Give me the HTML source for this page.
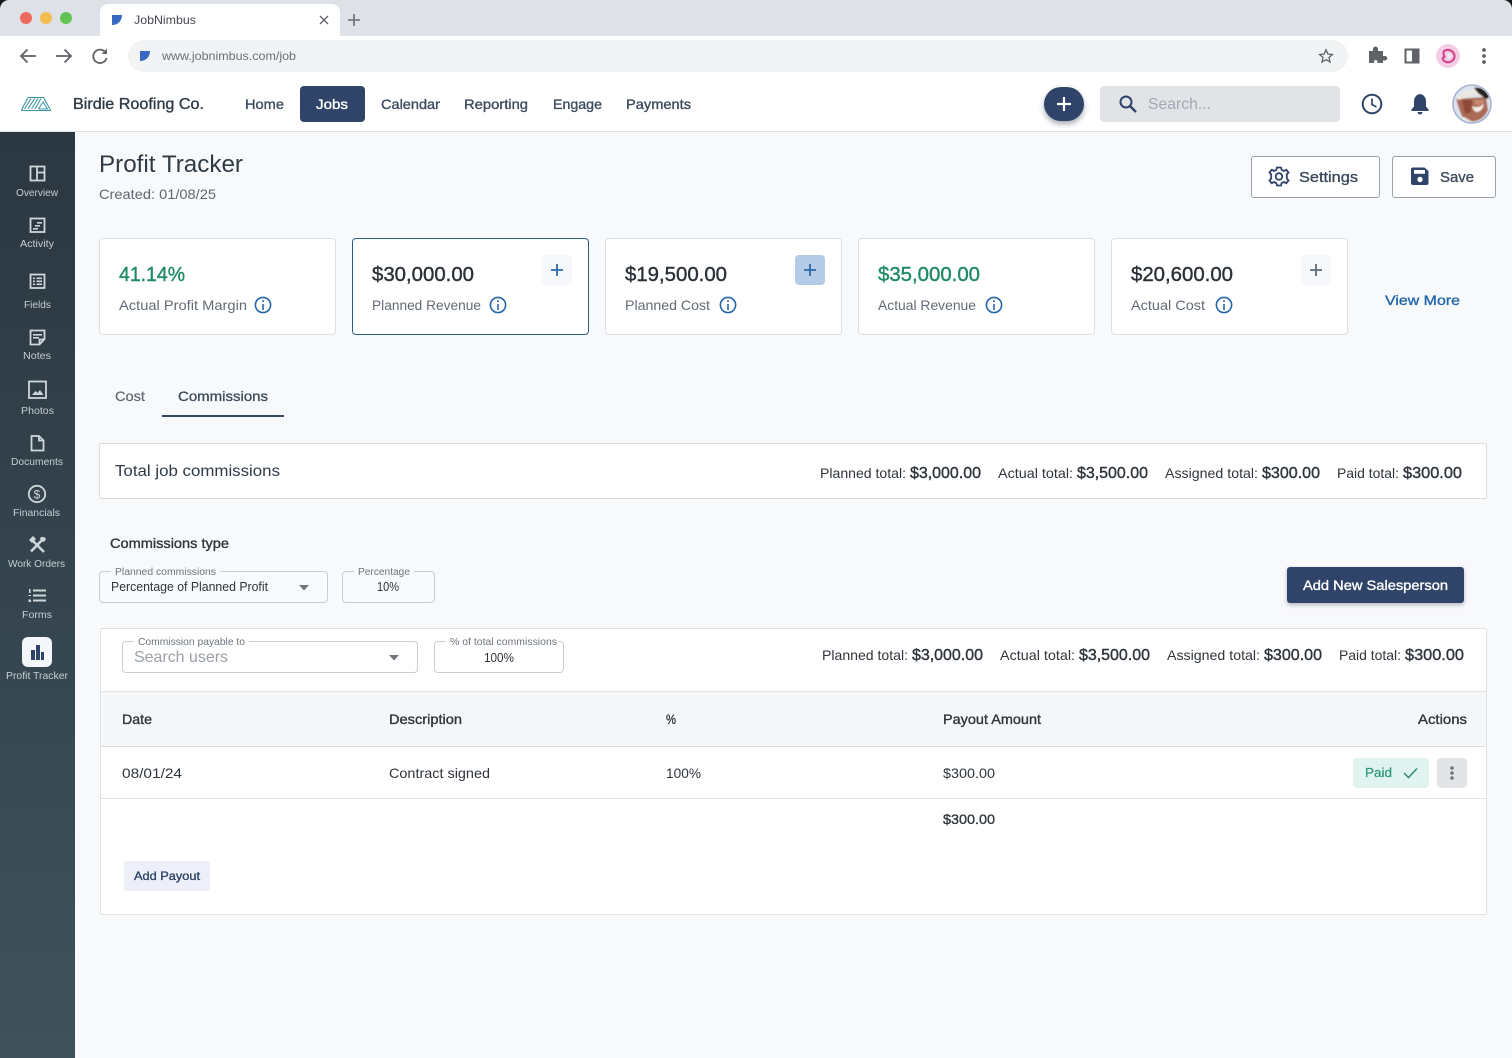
<!DOCTYPE html>
<html lang="en"><head><meta charset="utf-8"><title>JobNimbus - Profit Tracker</title>
<style>
html,body{margin:0;padding:0;width:1512px;height:1058px;overflow:hidden;background:#f8f9fb;font-family:"Liberation Sans",sans-serif}
.b{position:absolute;box-sizing:border-box}
.card{background:#fff;border:1px solid #dcdfe3;border-radius:4px;top:238px;width:237px;height:97px}
.fld{border:1px solid #c9cdd2;border-radius:4px;height:32px}
.fl{position:absolute;top:-2px;height:3px;background:#f8f9fb}
svg{position:absolute;left:0;top:0}
text{font-family:"Liberation Sans",sans-serif}
.m{stroke-width:.35px}
.nav{font-size:14px;fill:#3d4a5c;stroke:#3d4a5c;stroke-width:.35px}
.sb{font-size:10.5px;fill:#c6ced3}
.val{font-size:20px;fill:#2b3138;stroke:#2b3138;stroke-width:.4px}
.lab{font-size:14px;fill:#626b75}
.t{font-size:14px;fill:#2f353c}
.v{font-size:16px;fill:#2f353c;stroke:#2f353c;stroke-width:.4px}
.th{font-size:14px;fill:#2f353c;stroke:#2f353c;stroke-width:.35px}
.fll{font-size:10px;fill:#6d757e}
</style></head><body>

<!-- browser chrome -->
<div class="b" style="left:0;top:0;width:1512px;height:36px;background:#dee1e6"></div>
<div class="b" style="left:100px;top:4px;width:240px;height:32px;background:#fff;border-radius:8px 8px 0 0"></div>
<div class="b" style="left:0;top:36px;width:1512px;height:39px;background:#fff"></div>
<div class="b" style="left:128px;top:40px;width:1220px;height:32px;background:#f1f3f4;border-radius:16px"></div>

<!-- app header -->
<div class="b" style="left:0;top:75px;width:1512px;height:57px;background:#fff;border-bottom:1px solid #dfe2e5"></div>
<div class="b" style="left:300px;top:86px;width:65px;height:36px;background:#2f4468;border-radius:4px"></div>
<div class="b" style="left:1044px;top:87px;width:40px;height:34px;background:#2f4468;border-radius:17px;box-shadow:0 3px 6px rgba(30,40,60,.4)"></div>
<div class="b" style="left:1100px;top:86px;width:240px;height:36px;background:#e1e3e7;border-radius:4px"></div>

<!-- sidebar -->
<div class="b" style="left:0;top:132px;width:75px;height:926px;background:linear-gradient(180deg,#2b3741 0%,#3f525c 100%)"></div>
<div class="b" style="left:22px;top:637px;width:30px;height:30px;background:#f4f6f9;border-radius:6px"></div>

<!-- top buttons -->
<div class="b" style="left:1251px;top:156px;width:129px;height:42px;background:#fff;border:1px solid #9aa1aa;border-radius:3px"></div>
<div class="b" style="left:1392px;top:156px;width:104px;height:42px;background:#fff;border:1px solid #9aa1aa;border-radius:3px"></div>

<!-- metric cards -->
<div class="b card" style="left:99px"></div>
<div class="b card" style="left:352px;border-color:#2f5d8c"></div>
<div class="b card" style="left:605px"></div>
<div class="b card" style="left:858px"></div>
<div class="b card" style="left:1111px"></div>
<div class="b" style="left:542px;top:255px;width:30px;height:30px;background:#f6f8fb;border-radius:4px"></div>
<div class="b" style="left:795px;top:255px;width:30px;height:30px;background:#b5cbe8;border-radius:4px"></div>
<div class="b" style="left:1301px;top:255px;width:30px;height:30px;background:#f6f8fb;border-radius:4px"></div>

<!-- tabs -->
<div class="b" style="left:162px;top:415px;width:122px;height:2px;background:#33475f"></div>

<!-- total -->
<div class="b" style="left:99px;top:443px;width:1388px;height:56px;background:#fff;border:1px solid #d9dcdf;border-radius:2px"></div>

<!-- commissions type -->
<div class="b fld" style="left:99px;top:571px;width:229px"><div class="fl" style="left:11px;width:109px"></div></div>
<div class="b fld" style="left:342px;top:571px;width:93px"><div class="fl" style="left:11px;width:60px"></div></div>
<div class="b" style="left:1287px;top:567px;width:177px;height:36px;background:#2f4468;border-radius:3px;box-shadow:0 2px 4px rgba(30,40,60,.3)"></div>

<!-- commissions card -->
<div class="b" style="left:100px;top:628px;width:1387px;height:287px;background:#fff;border:1px solid #dfe2e5;border-radius:2px"></div>
<div class="b fld" style="left:122px;top:641px;width:296px"><div class="fl" style="left:11px;width:115px;background:#fff"></div></div>
<div class="b fld" style="left:434px;top:641px;width:130px"><div class="fl" style="left:11px;width:113px;background:#fff"></div></div>
<div class="b" style="left:101px;top:691px;width:1385px;height:56px;background:#f5f7f8;border-top:1px solid #e1e4e6;border-bottom:1px solid #dcdfe2"></div>
<div class="b" style="left:101px;top:798px;width:1385px;height:1px;background:#dfe2e5"></div>
<div class="b" style="left:1353px;top:758px;width:76px;height:30px;background:#e0f3ee;border-radius:4px"></div>
<div class="b" style="left:1437px;top:758px;width:30px;height:30px;background:#e2e4e7;border-radius:4px"></div>
<div class="b" style="left:124px;top:861px;width:86px;height:30px;background:#edf0f8;border-radius:3px"></div>

<svg width="1512" height="1058" viewBox="0 0 1512 1058" xmlns="http://www.w3.org/2000/svg">
<!-- window corners -->
<path d="M0 0H9A9 9 0 0 0 0 9Z" fill="#15181b"/><path d="M1512 0H1503A9 9 0 0 1 1512 9Z" fill="#15181b"/>
<circle cx="26" cy="18" r="6" fill="#ee6a5f"/><circle cx="46" cy="18" r="6" fill="#f5bd4f"/><circle cx="66" cy="18" r="6" fill="#61c454"/>
<!-- favicon -->
<path d="M112 15H122C122 21 118 25 112 25Z" fill="#3768c4"/>
<path d="M140 51H150C150 57 146 61 140 61Z" fill="#3768c4"/>
<text x="134" y="24" font-size="12" fill="#45494e" textLength="62" lengthAdjust="spacingAndGlyphs">JobNimbus</text>
<path d="M320 16L328 24M328 16L320 24" stroke="#5f6368" stroke-width="1.3"/>
<path d="M354 14V26M348 20H360" stroke="#6a6e73" stroke-width="1.6"/>
<path d="M36 56H21M27.500 49.500L21 56L27.500 62.500" fill="none" stroke="#5f6368" stroke-width="1.8"/>
<path d="M56 56H71M64.500 49.500L71 56L64.500 62.500" fill="none" stroke="#5f6368" stroke-width="1.8"/>
<path d="M105.500 52.500A6.700 6.700 0 1 0 106.500 58" fill="none" stroke="#5f6368" stroke-width="1.8"/><path d="M107 48.500V54H101.500Z" fill="#5f6368"/>
<text x="162" y="60" font-size="12" fill="#6b7076" textLength="134" lengthAdjust="spacingAndGlyphs">www.jobnimbus.com/job</text>
<path d="M1326 49.800L1327.900 54L1332.400 54.500L1329 57.500L1330 62L1326 59.700L1322 62L1323 57.500L1319.600 54.500L1324.100 54Z" fill="none" stroke="#5f6368" stroke-width="1.3"/>
<path d="M1369 52H1373V50A2 2 0 0 1 1378 50V52H1383V57H1385A2 2 0 0 1 1385 61.500H1383V64H1377.500V62A2 2 0 0 0 1374 62V64H1369Z" fill="#5f6368" transform="translate(0 -1)"/>
<rect x="1405.500" y="49.500" width="13" height="13" fill="#fff" stroke="#5f6368" stroke-width="2"/><rect x="1412" y="49.500" width="6.500" height="13" fill="#5f6368"/>
<circle cx="1448" cy="56" r="12" fill="#f2cfe7"/>
<path d="M1444 51C1448 48.500 1453.500 50.500 1454.500 55.500C1455 60 1450 63.500 1445.500 61.800C1442 60 1442 57.500 1444.500 56.800C1443.500 54.500 1443 52.500 1444 51Z" fill="none" stroke="#d8478c" stroke-width="2.200"/>
<path d="M1447.500 52.500L1452.500 56L1447.500 59.500Z" fill="#f7e8f2"/>
<circle cx="1484" cy="50" r="1.900" fill="#5f6368"/><circle cx="1484" cy="56" r="1.900" fill="#5f6368"/><circle cx="1484" cy="62" r="1.900" fill="#5f6368"/>

<!-- logo -->
<g fill="none" stroke="#3f97a6" stroke-width="1.100"><path d="M21 110.500H51"/><path d="M28 97.500H43.500L50.500 110M21.500 110L28 97.500"/><path d="M24.500 109L31 98.500M28 109L34.500 98.500M31.500 109L38 98.500M35 109L41 98.500M38.500 109L43 102L47.500 109H38.500"/></g>
<text x="73" y="109" font-size="16" class="m" fill="#2f3a45" stroke="#2f3a45" textLength="131" lengthAdjust="spacingAndGlyphs">Birdie Roofing Co.</text>
<text x="245" y="109" class="nav" textLength="39" lengthAdjust="spacingAndGlyphs">Home</text>
<text x="316" y="109" class="nav" style="fill:#fff;stroke:#fff" textLength="32" lengthAdjust="spacingAndGlyphs">Jobs</text>
<text x="381" y="109" class="nav" textLength="59" lengthAdjust="spacingAndGlyphs">Calendar</text>
<text x="464" y="109" class="nav" textLength="64" lengthAdjust="spacingAndGlyphs">Reporting</text>
<text x="553" y="109" class="nav" textLength="49" lengthAdjust="spacingAndGlyphs">Engage</text>
<text x="626" y="109" class="nav" textLength="65" lengthAdjust="spacingAndGlyphs">Payments</text>
<path d="M1064 97V111M1057 104H1071" stroke="#fff" stroke-width="2.200"/>
<circle cx="1126" cy="102" r="5.500" fill="none" stroke="#2f4468" stroke-width="2"/><path d="M1130 106L1136 112" stroke="#2f4468" stroke-width="2.400"/>
<text x="1148" y="109" font-size="16" fill="#a3a8b4" textLength="63" lengthAdjust="spacingAndGlyphs">Search...</text>
<circle cx="1372" cy="104" r="9.300" fill="none" stroke="#2f4468" stroke-width="2"/><path d="M1372 98.500V104.500L1376.500 107" fill="none" stroke="#2f4468" stroke-width="1.700"/>
<path d="M1420 94C1424 94.500 1426 98 1426 101.500V106.500L1428.500 109.500V111H1411.500V109.500L1414 106.500V101.500C1414 98 1416 94.500 1420 94Z" fill="#2f4468"/><path d="M1417.500 112H1422.500A2.500 2.500 0 0 1 1417.500 112Z" fill="#2f4468"/>
<!-- avatar -->
<defs><clipPath id="av"><circle cx="1472" cy="104" r="18"/></clipPath><filter id="bl" x="-10%" y="-10%" width="120%" height="120%"><feGaussianBlur stdDeviation=".7"/></filter></defs>
<circle cx="1472" cy="104" r="19" fill="#dfe6f2" stroke="#a3b3d0" stroke-width="1.600"/>
<g clip-path="url(#av)"><g filter="url(#bl)">
<rect x="1452" y="84" width="40" height="40" fill="#dde3ee"/>
<path d="M1456 99L1486 97L1488 110C1484 120 1474 124 1464 120C1460 113 1458 105 1456 99Z" fill="#ab6a54"/>
<path d="M1462 100H1472L1471 112L1465 114Z" fill="#8e4a38"/>
<path d="M1474 100H1484L1483 105H1475Z" fill="#c98a72"/>
<path d="M1456 97C1462 91 1470 89 1476 89L1482 94L1468 97L1458 100Z" fill="#ece8e1"/>
<path d="M1474 88C1480 86 1487 90 1491 97L1486 99L1478 93Z" fill="#27221f"/>
<path d="M1472 106Q1478 109 1484 104Q1482 112 1476 112Q1473 110 1472 106Z" fill="#f4eee8"/>
<path d="M1456 119L1464 117L1476 124H1456Z" fill="#e9ecef"/>
</g></g>

<!-- sidebar icons -->
<g fill="none" stroke="#cfd6da" stroke-width="1.800">
<rect x="30.500" y="166.500" width="14" height="14"/><path d="M37 166.500V180.500M37 172.500H44.500"/>
<rect x="30.500" y="218.500" width="14" height="13.500"/>
<rect x="30.500" y="274.500" width="14" height="13.500"/>
<path d="M30.500 337V330.500H44.500V339L39.500 344.500H30.500V337Z"/><path d="M39.500 344.500V339.500H44.500"/>
<rect x="29" y="381.500" width="17" height="16.500"/>
<path d="M31.500 436H39L43.500 440.500V450.500H31.500Z"/><path d="M39 436V440.500H43.500"/>
<circle cx="37" cy="494" r="8.200"/>
</g>
<g fill="#cfd6da">
<rect x="37" y="222" width="5" height="1.600"/><rect x="35" y="225" width="5" height="1.600"/><rect x="33" y="228" width="5" height="1.600"/>
<rect x="33" y="277.500" width="2" height="1.600"/><rect x="36.500" y="277.500" width="5.500" height="1.600"/><rect x="33" y="280.500" width="2" height="1.600"/><rect x="36.500" y="280.500" width="5.500" height="1.600"/><rect x="33" y="283.500" width="2" height="1.600"/><rect x="36.500" y="283.500" width="5.500" height="1.600"/>
<rect x="33" y="334" width="9" height="1.600"/><rect x="33" y="337" width="6" height="1.600"/>
<path d="M32 395L35.500 391L37.500 393L40 390L43.500 395Z"/>
<path d="M29 589H30.500V593H29ZM33 589.500H46V591.500H33ZM33 594.500H46V596.500H33ZM33 599.500H46V601.500H33ZM28.500 595H31V596H28.500ZM28.500 599.500H31V602H28.500Z"/>
</g>
<text x="37" y="498.500" font-size="12" fill="#cfd6da" text-anchor="middle">$</text>
<g stroke="#cfd6da" fill="#cfd6da"><path d="M31 539L44 552" stroke-width="2.600"/><path d="M43.500 538.500L31 551.500" stroke-width="2.600"/><path d="M29 540L33 536L36 539L32 543Z" stroke="none"/><path d="M40 538C42 536 45 537 46 539L44 542L41 541Z" stroke="none"/></g>
<g fill="#2f4468"><rect x="31" y="650" width="4" height="10"/><rect x="36" y="645" width="4" height="15"/><rect x="41" y="652" width="3" height="8"/></g>
<g text-anchor="start">
<text x="16" y="196" class="sb" textLength="42" lengthAdjust="spacingAndGlyphs">Overview</text>
<text x="20" y="247" class="sb" textLength="34" lengthAdjust="spacingAndGlyphs">Activity</text>
<text x="24" y="308" class="sb" textLength="27" lengthAdjust="spacingAndGlyphs">Fields</text>
<text x="23" y="359" class="sb" textLength="28" lengthAdjust="spacingAndGlyphs">Notes</text>
<text x="21" y="414" class="sb" textLength="33" lengthAdjust="spacingAndGlyphs">Photos</text>
<text x="11" y="465" class="sb" textLength="52" lengthAdjust="spacingAndGlyphs">Documents</text>
<text x="13" y="516" class="sb" textLength="47" lengthAdjust="spacingAndGlyphs">Financials</text>
<text x="8" y="567" class="sb" textLength="57" lengthAdjust="spacingAndGlyphs">Work Orders</text>
<text x="22" y="618" class="sb" textLength="30" lengthAdjust="spacingAndGlyphs">Forms</text>
<text x="6" y="679" class="sb" textLength="62" lengthAdjust="spacingAndGlyphs">Profit Tracker</text>
</g>

<!-- page head -->
<text x="99" y="172" font-size="24" fill="#2f3a45" textLength="144" lengthAdjust="spacingAndGlyphs">Profit Tracker</text>
<text x="99" y="199" font-size="14" fill="#5f6872" textLength="117" lengthAdjust="spacingAndGlyphs">Created: 01/08/25</text>
<g fill="none" stroke="#2f4468" stroke-width="1.800"><circle cx="1279" cy="176.500" r="3.300"/><path d="M1277 167.500H1281L1281.700 170L1284 171L1286.300 169.800L1288.500 172.500L1286.800 174.500V178.500L1288.500 180.500L1286.300 183.200L1284 182L1281.700 183L1281 185.500H1277L1276.300 183L1274 182L1271.700 183.200L1269.500 180.500L1271.200 178.500V174.500L1269.500 172.500L1271.700 169.800L1274 171L1276.300 170Z"/></g>
<text x="1299" y="182" font-size="15" class="m" fill="#3d4a5c" stroke="#3d4a5c" textLength="59" lengthAdjust="spacingAndGlyphs">Settings</text>
<path d="M1413 167.500H1424.500L1428.500 171V183A2 2 0 0 1 1426.500 185H1413A2 2 0 0 1 1411 183V169.500A2 2 0 0 1 1413 167.500Z" fill="#2f4468"/><rect x="1414" y="170" width="11" height="3.800" fill="#fff"/><circle cx="1420" cy="179.500" r="2.700" fill="#fff"/>
<text x="1440" y="182" font-size="15" class="m" fill="#3d4a5c" stroke="#3d4a5c" textLength="34" lengthAdjust="spacingAndGlyphs">Save</text>

<!-- cards -->
<text x="119" y="281" class="val" style="fill:#1f8a66;stroke:#1f8a66" textLength="66" lengthAdjust="spacingAndGlyphs">41.14%</text>
<text x="372" y="281" class="val" textLength="102" lengthAdjust="spacingAndGlyphs">$30,000.00</text>
<text x="625" y="281" class="val" textLength="102" lengthAdjust="spacingAndGlyphs">$19,500.00</text>
<text x="878" y="281" class="val" style="fill:#1f8a66;stroke:#1f8a66" textLength="102" lengthAdjust="spacingAndGlyphs">$35,000.00</text>
<text x="1131" y="281" class="val" textLength="102" lengthAdjust="spacingAndGlyphs">$20,600.00</text>
<text x="119" y="310" class="lab" textLength="128" lengthAdjust="spacingAndGlyphs">Actual Profit Margin</text>
<text x="372" y="310" class="lab" textLength="109" lengthAdjust="spacingAndGlyphs">Planned Revenue</text>
<text x="625" y="310" class="lab" textLength="85" lengthAdjust="spacingAndGlyphs">Planned Cost</text>
<text x="878" y="310" class="lab" textLength="98" lengthAdjust="spacingAndGlyphs">Actual Revenue</text>
<text x="1131" y="310" class="lab" textLength="74" lengthAdjust="spacingAndGlyphs">Actual Cost</text>
<g fill="none" stroke="#2467ab" stroke-width="1.600"><circle cx="263" cy="305" r="7.600"/><circle cx="498" cy="305" r="7.600"/><circle cx="728" cy="305" r="7.600"/><circle cx="994" cy="305" r="7.600"/><circle cx="1224" cy="305" r="7.600"/>
<path d="M263 304V310M498 304V310M728 304V310M994 304V310M1224 304V310"/></g>
<g fill="#2467ab"><circle cx="263" cy="301.300" r="1"/><circle cx="498" cy="301.300" r="1"/><circle cx="728" cy="301.300" r="1"/><circle cx="994" cy="301.300" r="1"/><circle cx="1224" cy="301.300" r="1"/></g>
<path d="M557 264V276M551 270H563" stroke="#2a6aa8" stroke-width="1.800"/>
<path d="M810 264V276M804 270H816" stroke="#2a6aa8" stroke-width="1.800"/>
<path d="M1316 264V276M1310 270H1322" stroke="#5d6b78" stroke-width="1.800"/>
<text x="1385" y="305" font-size="14" class="m" fill="#2467ab" stroke="#2467ab" textLength="75" lengthAdjust="spacingAndGlyphs">View More</text>

<!-- tabs -->
<text x="115" y="401" font-size="14" fill="#5d6670" textLength="30" lengthAdjust="spacingAndGlyphs" style="stroke:#5d6670;stroke-width:.2px">Cost</text>
<text x="178" y="401" font-size="14" fill="#3a4a5c" textLength="90" lengthAdjust="spacingAndGlyphs" style="stroke:#3a4a5c;stroke-width:.3px">Commissions</text>

<!-- total -->
<text x="115" y="476" font-size="16" fill="#2f3a45" textLength="165" lengthAdjust="spacingAndGlyphs">Total job commissions</text>
<text x="820" y="478" class="t" textLength="86" lengthAdjust="spacingAndGlyphs">Planned total:</text>
<text x="910" y="478" class="v" textLength="71" lengthAdjust="spacingAndGlyphs">$3,000.00</text>
<text x="998" y="478" class="t" textLength="75" lengthAdjust="spacingAndGlyphs">Actual total:</text>
<text x="1077" y="478" class="v" textLength="71" lengthAdjust="spacingAndGlyphs">$3,500.00</text>
<text x="1165" y="478" class="t" textLength="93" lengthAdjust="spacingAndGlyphs">Assigned total:</text>
<text x="1262" y="478" class="v" textLength="58" lengthAdjust="spacingAndGlyphs">$300.00</text>
<text x="1337" y="478" class="t" textLength="62" lengthAdjust="spacingAndGlyphs">Paid total:</text>
<text x="1403" y="478" class="v" textLength="59" lengthAdjust="spacingAndGlyphs">$300.00</text>

<!-- commissions type -->
<text x="110" y="548" font-size="14" class="m" fill="#2f353c" stroke="#2f353c" textLength="119" lengthAdjust="spacingAndGlyphs">Commissions type</text>
<text x="115" y="575" class="fll" textLength="101" lengthAdjust="spacingAndGlyphs">Planned commissions</text>
<text x="111" y="591" font-size="13" fill="#2f353c" textLength="157" lengthAdjust="spacingAndGlyphs">Percentage of Planned Profit</text>
<path d="M299 585H309L304 590.500Z" fill="#70767c"/>
<text x="358" y="575" class="fll" textLength="52" lengthAdjust="spacingAndGlyphs">Percentage</text>
<text x="377" y="591" font-size="12.500" fill="#2f353c" textLength="22" lengthAdjust="spacingAndGlyphs">10%</text>
<text x="1303" y="590" font-size="14" class="m" fill="#fff" stroke="#fff" textLength="145" lengthAdjust="spacingAndGlyphs">Add New Salesperson</text>

<!-- fields -->
<text x="138" y="645" class="fll" textLength="107" lengthAdjust="spacingAndGlyphs">Commission payable to</text>
<text x="134" y="662" font-size="16" fill="#9aa0a6" textLength="94" lengthAdjust="spacingAndGlyphs">Search users</text>
<path d="M389 655H399L394 660.500Z" fill="#70767c"/>
<text x="450" y="645" class="fll" textLength="107" lengthAdjust="spacingAndGlyphs">% of total commissions</text>
<text x="484" y="662" font-size="12.500" fill="#2f353c" textLength="30" lengthAdjust="spacingAndGlyphs">100%</text>
<text x="822" y="660" class="t" textLength="86" lengthAdjust="spacingAndGlyphs">Planned total:</text>
<text x="912" y="660" class="v" textLength="71" lengthAdjust="spacingAndGlyphs">$3,000.00</text>
<text x="1000" y="660" class="t" textLength="75" lengthAdjust="spacingAndGlyphs">Actual total:</text>
<text x="1079" y="660" class="v" textLength="71" lengthAdjust="spacingAndGlyphs">$3,500.00</text>
<text x="1167" y="660" class="t" textLength="93" lengthAdjust="spacingAndGlyphs">Assigned total:</text>
<text x="1264" y="660" class="v" textLength="58" lengthAdjust="spacingAndGlyphs">$300.00</text>
<text x="1339" y="660" class="t" textLength="62" lengthAdjust="spacingAndGlyphs">Paid total:</text>
<text x="1405" y="660" class="v" textLength="59" lengthAdjust="spacingAndGlyphs">$300.00</text>

<!-- table -->
<text x="122" y="724" class="th" textLength="30" lengthAdjust="spacingAndGlyphs">Date</text>
<text x="389" y="724" class="th" textLength="73" lengthAdjust="spacingAndGlyphs">Description</text>
<text x="666" y="724" class="th" textLength="10" lengthAdjust="spacingAndGlyphs">%</text>
<text x="943" y="724" class="th" textLength="98" lengthAdjust="spacingAndGlyphs">Payout Amount</text>
<text x="1418" y="724" class="th" textLength="49" lengthAdjust="spacingAndGlyphs">Actions</text>
<text x="122" y="778" class="t" textLength="60" lengthAdjust="spacingAndGlyphs">08/01/24</text>
<text x="389" y="778" class="t" textLength="101" lengthAdjust="spacingAndGlyphs">Contract signed</text>
<text x="666" y="778" class="t" textLength="35" lengthAdjust="spacingAndGlyphs">100%</text>
<text x="943" y="778" class="t" textLength="52" lengthAdjust="spacingAndGlyphs">$300.00</text>
<text x="1365" y="777" font-size="13" fill="#2f9a7a" textLength="27" lengthAdjust="spacingAndGlyphs" style="stroke:#2f9a7a;stroke-width:.25px">Paid</text>
<path d="M1404 773L1408.500 777.500L1417 768.500" fill="none" stroke="#2f8a70" stroke-width="1.500"/>
<circle cx="1452" cy="768" r="1.800" fill="#70767c"/><circle cx="1452" cy="773" r="1.800" fill="#70767c"/><circle cx="1452" cy="778" r="1.800" fill="#70767c"/>
<text x="943" y="824" class="th" textLength="52" lengthAdjust="spacingAndGlyphs">$300.00</text>
<text x="134" y="880" font-size="12" class="m" fill="#2f4468" stroke="#2f4468" textLength="66" lengthAdjust="spacingAndGlyphs">Add Payout</text>
</svg>
</body></html>
